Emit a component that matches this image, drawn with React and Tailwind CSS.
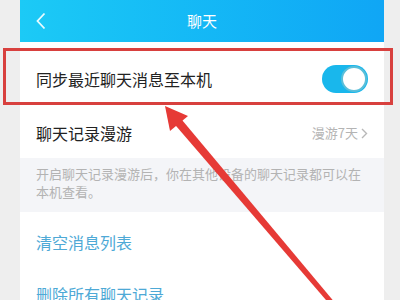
import React from 'react';

const FONT = { fontFamily: '"Noto Sans CJK SC", "Noto Sans", sans-serif' };

// on-state switch, like the iOS style one in the screenshot
function Toggle() {
  return (
    <div className="w-[46px] h-[28px] rounded-full bg-[#19b7ec] flex items-center justify-end pr-[1px]">
      <div className="w-[26px] h-[26px] rounded-full bg-white border-[2px] border-[#5bbfd9]" />
    </div>
  );
}

function Row({ children, className = '' }) {
  return (
    <div className={`flex items-center justify-between px-[16px] ${className}`}>
      {children}
    </div>
  );
}

export default function App() {
  return (
    <div className="relative w-[400px] h-[300px] overflow-hidden bg-[#eeeeee]" style={FONT}>
      <div className="ml-[20px] w-[364px] h-full bg-white flex flex-col">
        {/* header */}
        <div className="h-[42px] shrink-0 bg-gradient-to-r from-[#1ccaf6] to-[#10a6f5] flex items-center relative">
          <svg className="absolute left-[15px] top-[12px]" width="12" height="18" viewBox="0 0 12 18">
            <path d="M9.5 1.5 L2.5 9 L9.5 16.5" fill="none" stroke="#e8fbff" strokeWidth="1.8" />
          </svg>
          <div className="flex-1 text-center text-white text-[15px]">聊天</div>
        </div>

        <div className="h-[8px] shrink-0" />

        <Row className="h-[58px] shrink-0">
          <span className="text-[16px] text-[#222]">同步最近聊天消息至本机</span>
          <Toggle />
        </Row>

        <Row className="h-[50px] shrink-0">
          <span className="text-[16px] text-[#222]">聊天记录漫游</span>
          <span className="flex items-center gap-[3px] text-[13px] text-[#b4b4b4]">
            漫游7天
            <svg width="7" height="11" viewBox="0 0 7 11">
              <path d="M1 1 L5.5 5.5 L1 10" fill="none" stroke="#b8b8b8" strokeWidth="1.4" />
            </svg>
          </span>
        </Row>

        <div className="h-[54px] shrink-0 bg-[#f4f5f8] px-[16px] pt-[7px] text-[13px] leading-[18px] text-[#b3b3b3]">
          开启聊天记录漫游后，你在其他设备的聊天记录都可以在本机查看。
        </div>

        <Row className="h-[60px] shrink-0">
          <span className="text-[16px] text-[#4ea9d6]">清空消息列表</span>
        </Row>
        <Row className="h-[44px] shrink-0">
          <span className="text-[16px] text-[#4ea9d6]">删除所有聊天记录</span>
        </Row>
      </div>

      {/* red annotation box */}
      <div className="absolute left-[3px] top-[48px] w-[390px] h-[57px] border-[3px] border-[#d8403e]" />

      {/* red annotation arrow */}
      <svg className="absolute left-0 top-0" width="400" height="300" viewBox="0 0 400 300">
        <polygon points="174.8,124.5 181.2,119 336,304 332,307" fill="#e63a36" />
        <polygon points="165,106 188,116 170,131" fill="#e63a36" />
      </svg>
    </div>
  );
}
